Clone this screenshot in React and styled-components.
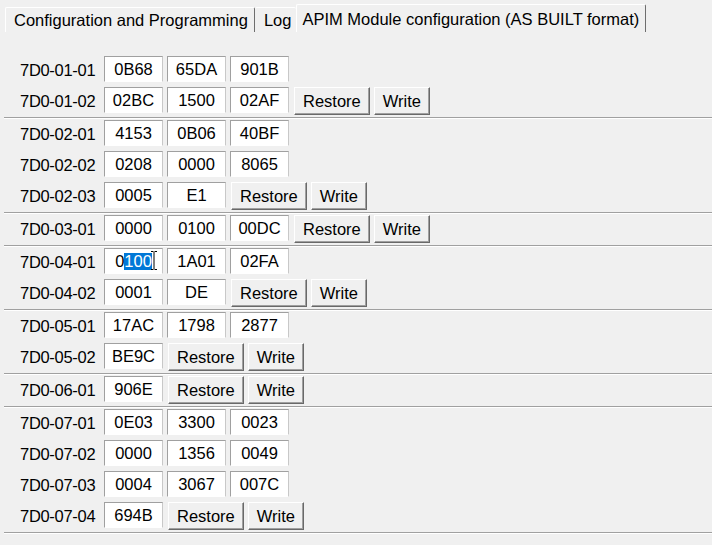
import React from 'react'
import styled, { createGlobalStyle } from 'styled-components'

const GlobalStyle = createGlobalStyle`
  html, body {
    margin: 0;
    background: #f0f0f0;
  }
  body {
    font-family: "Liberation Sans", Arial, sans-serif;
    color: #000;
  }
`

const Window = styled.div`
  width: 712px;
  height: 545px;
  overflow: hidden;
  background: #f0f0f0;
  display: flex;
  flex-direction: column;
`

const TabStrip = styled.div`
  display: flex;
  align-items: flex-end;
  height: 32px;
  padding-left: 5px;
`

const Tab = styled.div`
  box-sizing: border-box;
  font-size: 16.5px;
  white-space: nowrap;
  border-top: 1px solid #fff;
  border-left: ${(p) => (p.$edge ? '1px solid #fff' : 'none')};
  border-right: ${(p) => (p.$divider ? '1px solid #6e6e6e' : 'none')};
  border-radius: 2px 2px 0 0;
  height: ${(p) => (p.$active ? 28 : 25)}px;
  line-height: ${(p) => (p.$active ? 25 : 24)}px;
  padding: ${(p) => p.$pad};
`

const Pane = styled.div`
  padding-top: 23px;
  display: flex;
  flex-direction: column;
`

const Group = styled.div`
  margin-left: 4px;
  margin-bottom: 1px;
  border-bottom: 1px solid #a0a0a0;
  box-shadow: 0 1px 0 #fff;
`

const Row = styled.div`
  box-sizing: border-box;
  height: 31px;
  padding: 1px 0 0 16px;
  display: flex;
  align-items: flex-start;
  gap: 4px;
`

const Label = styled.div`
  width: 80px;
  padding-top: 1px;
  font-size: 16.5px;
  letter-spacing: -0.3px;
  line-height: 26px;
  white-space: nowrap;
`

const Field = styled.div`
  position: relative;
  box-sizing: border-box;
  width: 59px;
  height: 26px;
  background: #fff;
  border-style: solid;
  border-width: 1px;
  border-color: #a0a0a0 #c8c8c8 #fff #a0a0a0;
  text-align: center;
  font-size: 16.5px;
  line-height: 24px;
`

const Selected = styled.span`
  display: inline-block;
  line-height: 17px;
  background: #0078d7;
  color: #fff;
`

const Caret = styled.svg`
  position: absolute;
  left: 45px;
  top: 1px;
`

const Buttons = styled.div`
  display: flex;
  gap: 4px;
  margin-left: 1px;
`

const Button = styled.button`
  box-sizing: border-box;
  height: 28px;
  padding: 0 8px;
  font-family: inherit;
  font-size: 16.5px;
  color: #000;
  background: #f0f0f0;
  border: 1px solid;
  border-color: #fff #696969 #696969 #fff;
  box-shadow: inset -1px -1px 0 #a0a0a0;
  border-radius: 0;
`

const groups = [
  [
    ['7D0-01-01', ['0B68', '65DA', '901B']],
    ['7D0-01-02', ['02BC', '1500', '02AF']],
  ],
  [
    ['7D0-02-01', ['4153', '0B06', '40BF']],
    ['7D0-02-02', ['0208', '0000', '8065']],
    ['7D0-02-03', ['0005', 'E1']],
  ],
  [['7D0-03-01', ['0000', '0100', '00DC']]],
  [
    ['7D0-04-01', ['0100', '1A01', '02FA']],
    ['7D0-04-02', ['0001', 'DE']],
  ],
  [
    ['7D0-05-01', ['17AC', '1798', '2877']],
    ['7D0-05-02', ['BE9C']],
  ],
  [['7D0-06-01', ['906E']]],
  [
    ['7D0-07-01', ['0E03', '3300', '0023']],
    ['7D0-07-02', ['0000', '1356', '0049']],
    ['7D0-07-03', ['0004', '3067', '007C']],
    ['7D0-07-04', ['694B']],
  ],
]

// the field being edited, with part of its text selected
function EditedField() {
  return (
    <Field>
      0<Selected>100</Selected>
      <Caret width="7" height="21" viewBox="0 0 7 21">
        <path d="M1 1.5h2.5M4.5 1.5H7M4 2v17M1 19.5h2.5M4.5 19.5H7" stroke="#000" strokeWidth="1" fill="none" />
      </Caret>
    </Field>
  )
}

export default function App() {
  return (
    <Window>
      <GlobalStyle />
      <TabStrip>
        <Tab $edge $divider $pad="0 6px 0 8px">Configuration and Programming</Tab>
        <Tab $pad="0 5px 0 9px">Log</Tab>
        <Tab $active $edge $divider $pad="2px 6px 0 5px">APIM Module configuration (AS BUILT format)</Tab>
      </TabStrip>
      <Pane>
        {groups.map((rows, g) => (
          <Group key={g}>
            {rows.map(([id, values], r) => (
              <Row key={id}>
                <Label>{id}</Label>
                {values.map((v, i) =>
                  id === '7D0-04-01' && i === 0 ? <EditedField key={i} /> : <Field key={i}>{v}</Field>
                )}
                {r === rows.length - 1 && (
                  <Buttons>
                    <Button>Restore</Button>
                    <Button>Write</Button>
                  </Buttons>
                )}
              </Row>
            ))}
          </Group>
        ))}
      </Pane>
    </Window>
  )
}
